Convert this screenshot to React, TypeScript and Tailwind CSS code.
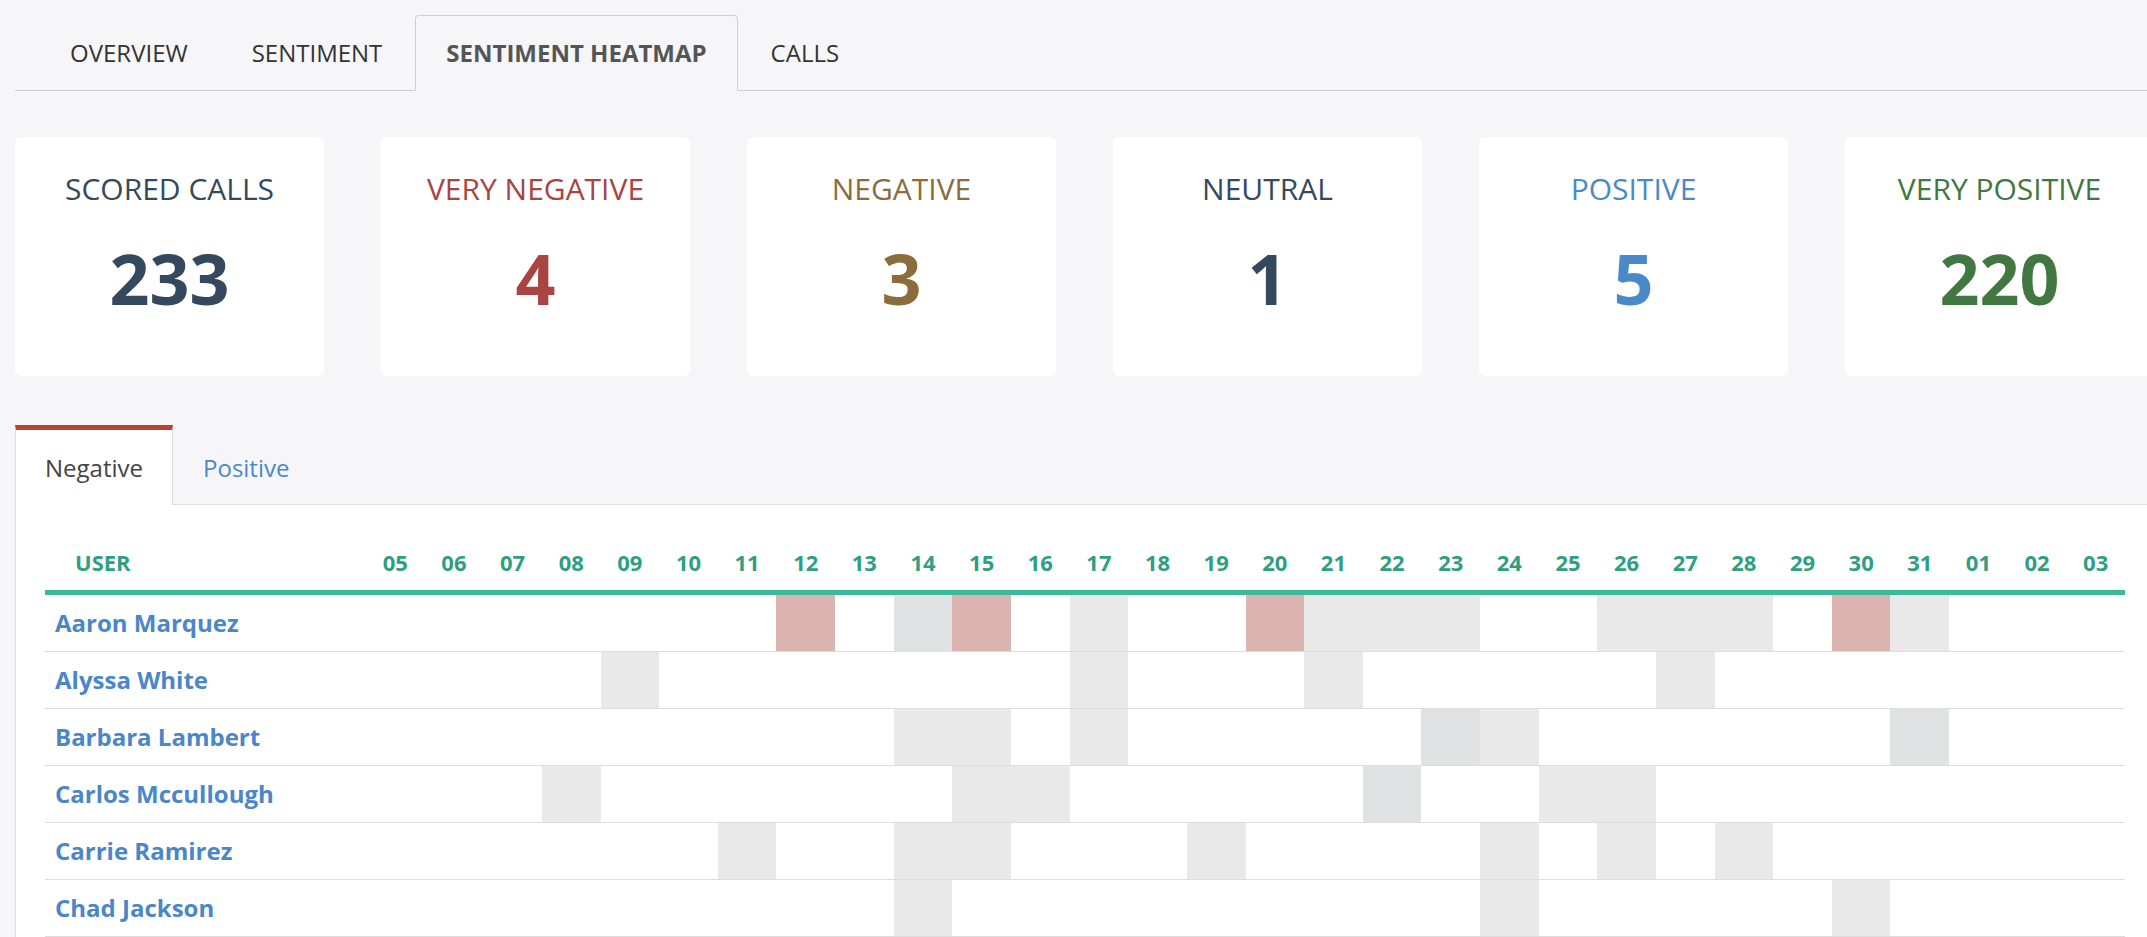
import React from 'react';

type Fill = 'r' | 'g' | 'd';

interface Stat {
  label: string;
  value: number;
  color: string;
}

interface Row {
  name: string;
  cells: Record<string, Fill>;
}

const stats: Stat[] = [
  { label: 'SCORED CALLS', value: 233, color: 'text-[#34495e]' },
  { label: 'VERY NEGATIVE', value: 4, color: 'text-[#a94442]' },
  { label: 'NEGATIVE', value: 3, color: 'text-[#8a6d3b]' },
  { label: 'NEUTRAL', value: 1, color: 'text-[#34495e]' },
  { label: 'POSITIVE', value: 5, color: 'text-[#4a89c8]' },
  { label: 'VERY POSITIVE', value: 220, color: 'text-[#417741]' },
];

const days = [
  '05', '06', '07', '08', '09', '10', '11', '12', '13', '14', '15', '16', '17', '18', '19',
  '20', '21', '22', '23', '24', '25', '26', '27', '28', '29', '30', '31', '01', '02', '03',
];

const rows: Row[] = [
  {
    name: 'Aaron Marquez',
    cells: { '12': 'r', '14': 'd', '15': 'r', '17': 'g', '20': 'r', '21': 'g', '22': 'g', '23': 'g', '26': 'g', '27': 'g', '28': 'g', '30': 'r', '31': 'g' },
  },
  { name: 'Alyssa White', cells: { '09': 'g', '17': 'g', '21': 'g', '27': 'g' } },
  { name: 'Barbara Lambert', cells: { '14': 'g', '15': 'g', '17': 'g', '23': 'd', '24': 'g', '31': 'd' } },
  { name: 'Carlos Mccullough', cells: { '08': 'g', '15': 'g', '16': 'g', '22': 'd', '25': 'g', '26': 'g' } },
  { name: 'Carrie Ramirez', cells: { '11': 'g', '14': 'g', '15': 'g', '19': 'g', '24': 'g', '26': 'g', '28': 'g' } },
  { name: 'Chad Jackson', cells: { '14': 'g', '24': 'g', '30': 'g' } },
];

const fillClass: Record<Fill, string> = {
  r: 'bg-[#dbb4af]',
  g: 'bg-[#e8e9e8]',
  d: 'bg-[#e1e2e4]',
};

const topTabs = ['OVERVIEW', 'SENTIMENT', 'SENTIMENT HEATMAP', 'CALLS'];

const StatCard: React.FC<{ stat: Stat }> = ({ stat }) => (
  <div className="flex h-[239px] w-[309px] shrink-0 flex-col items-center rounded-[6px] bg-white pt-[32px]">
    <div className={`text-[30px] leading-[40px] ${stat.color}`}>{stat.label}</div>
    <div className={`mt-[34px] text-[70px] font-bold leading-none ${stat.color}`}>{stat.value}</div>
  </div>
);

const App: React.FC = () => {
  return (
    <div className="h-[937px] w-[2147px] overflow-hidden bg-[#f6f6f8] font-['Open_Sans',sans-serif]">
      <div className="w-[2154px] pl-[15px] pt-[15px]">
        {/* top navigation tabs */}
        <div className="flex border-b border-[#cfcfd2] pl-[24px]">
          {topTabs.map((t) => {
            const active = t === 'SENTIMENT HEATMAP';
            return (
              <div
                key={t}
                className={
                  active
                    ? '-mb-px mr-[2px] flex h-[76px] items-center rounded-t-[4px] border border-[#cfcfd2] border-b-[#f6f6f8] bg-[#f6f6f8] px-[30px] text-[24px] font-bold text-[#555]'
                    : '-mb-px mr-[2px] flex h-[76px] items-center border border-transparent px-[30px] text-[24px] text-[#333]'
                }
              >
                {t}
              </div>
            );
          })}
        </div>

        {/* stat cards */}
        <div className="mt-[46px] flex gap-[57px]">
          {stats.map((s) => (
            <StatCard key={s.label} stat={s} />
          ))}
        </div>

        {/* heatmap tabs */}
        <div className="mt-[49px] flex border-b border-[#dddddf]">
          <div className="-mb-px flex h-[80px] items-center border-x border-t-[5px] border-x-[#dddddf] border-t-[#b8422f] bg-white px-[29px] text-[24px] text-[#444]">
            Negative
          </div>
          <div className="-mb-px flex h-[80px] items-center border-t-[5px] border-transparent px-[30px] text-[24px] text-[#4a89c8]">
            Positive
          </div>
        </div>

        {/* heatmap table */}
        <div className="border-l border-[#dddddf] bg-white px-[29px] pt-[42px]">
          <div className="grid grid-cols-[321px_repeat(30,minmax(0,1fr))] border-b-[5px] border-[#3bb99a] pb-[13px] text-[22px] font-bold leading-[30px] text-[#2f9e83]">
            <div className="pl-[30px]">USER</div>
            {days.map((d) => (
              <div key={d} className="text-center">
                {d}
              </div>
            ))}
          </div>
          {rows.map((r) => (
            <div
              key={r.name}
              className="grid h-[57px] grid-cols-[321px_repeat(30,minmax(0,1fr))] border-b border-[#dddddf]"
            >
              <div className="flex items-center pl-[10px] text-[24px] font-bold text-[#4a86c8]">{r.name}</div>
              {days.map((d) => {
                const f = r.cells[d];
                return <div key={d} className={f ? fillClass[f] : ''} />;
              })}
            </div>
          ))}
        </div>
      </div>
    </div>
  );
};

export default App;
